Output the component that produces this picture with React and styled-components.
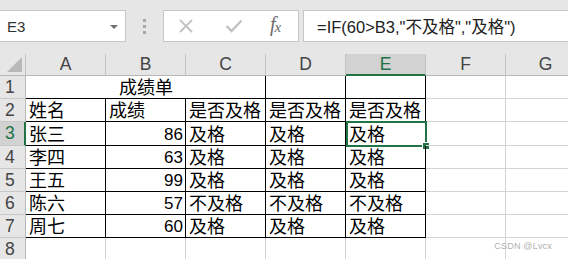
import React from "react";
import styled, { createGlobalStyle } from "styled-components";

const Global = createGlobalStyle`
  html, body { margin: 0; padding: 0; background: #ffffff; }
  body { width: 568px; height: 259px; overflow: hidden; font-family: "Liberation Sans", "Noto Sans CJK SC", sans-serif; }
`;

const Page = styled.div`
  position: relative;
  width: 568px;
  height: 259px;
  overflow: hidden;
  background: #ffffff;
`;

const Toolbar = styled.div`
  display: flex;
  align-items: flex-start;
  height: 54px;
  padding-top: 10px;
  box-sizing: border-box;
  background: #e6e6e6;
`;

const Box = styled.div`
  box-sizing: border-box;
  height: 32px;
  background: #ffffff;
  border: 1px solid #c6c6c6;
  display: flex;
  align-items: center;
`;

const NameBox = styled(Box)`
  width: 127px;
  margin-left: -1px;
  padding: 0 7px 0 7px;
  justify-content: space-between;
`;

const NameText = styled.span`
  font-family: "Liberation Sans", sans-serif;
  font-size: 15px;
  color: #333333;
`;

const DropArrow = styled.span`
  width: 0;
  height: 0;
  border-left: 4px solid transparent;
  border-right: 4px solid transparent;
  border-top: 4px solid #6f6f6f;
  margin-top: 1px;
`;

const Grip = styled.div`
  width: 37px;
  height: 32px;
  display: flex;
  flex-direction: column;
  align-items: center;
  justify-content: center;
  gap: 3px;
`;

const Dot = styled.span`
  width: 3px;
  height: 3px;
  background: #a6a6a6;
`;

const FxButtons = styled(Box)`
  width: 136px;
  padding-left: 14px;
  gap: 0;
`;

const IconSlot = styled.span`
  width: ${(p) => p.$w}px;
  display: flex;
  align-items: center;
  justify-content: ${(p) => p.$justify || "flex-start"};
`;

const FxLabel = styled.span`
  font-family: "Liberation Serif", "DejaVu Serif", serif;
  font-style: italic;
  font-size: 20px;
  color: #6a6a6a;
  letter-spacing: -1px;
  margin-top: -3px;
  sub {
    font-size: 15px;
    vertical-align: -1px;
  }
`;

const FormulaInput = styled(Box)`
  flex: 1;
  margin-left: 4px;
  margin-right: -4px;
  padding-left: 13px;
  font-family: "Liberation Sans", "Noto Sans CJK SC", sans-serif;
  font-size: 16.5px;
  color: #222222;
  white-space: nowrap;
`;

const Sheet = styled.div`
  display: grid;
  grid-template-columns: 26px repeat(7, 80px);
  grid-template-rows: 22px 23px 23px 24px 23px 23px 23px 23px 23px;
  width: 586px;
  background: #ffffff;
`;

const Corner = styled.div`
  box-sizing: border-box;
  background: #e6e6e6;
  border-right: 1px solid #c3c3c3;
  border-bottom: 1px solid #b8b8b8;
  display: flex;
  align-items: flex-end;
  justify-content: flex-end;
  padding: 0 3px 3px 0;
`;

const ColHead = styled.div`
  box-sizing: border-box;
  background: ${(p) => (p.$sel ? "#d2d2d2" : "#e6e6e6")};
  color: ${(p) => (p.$sel ? "#217346" : "#444444")};
  border-right: 1px solid #c3c3c3;
  border-bottom: ${(p) => (p.$sel ? "2px solid #217346" : "1px solid #b8b8b8")};
  display: flex;
  align-items: center;
  justify-content: center;
  font-family: "Liberation Sans", sans-serif;
  font-size: 17.5px;
  padding-top: ${(p) => (p.$sel ? "1px" : "0")};
`;

const RowHead = styled.div`
  box-sizing: border-box;
  background: ${(p) => (p.$sel ? "#d2d2d2" : "#e6e6e6")};
  color: ${(p) => (p.$sel ? "#217346" : "#444444")};
  border-right: ${(p) => (p.$sel ? "2px solid #217346" : "1px solid #b8b8b8")};
  border-bottom: 1px solid #c8c8c8;
  display: flex;
  align-items: center;
  padding-left: 5px;
  font-family: "Liberation Sans", sans-serif;
  font-size: 17.5px;
`;

const Cell = styled.div`
  box-sizing: border-box;
  position: relative;
  grid-column: span ${(p) => p.$span || 1};
  border-right: 1px solid ${(p) => (p.$line ? "#000000" : "#d4d4d4")};
  border-bottom: 1px solid ${(p) => (p.$line ? "#000000" : "#d4d4d4")};
  display: flex;
  align-items: flex-end;
  justify-content: ${(p) =>
    p.$align === "right" ? "flex-end" : p.$align === "center" ? "center" : "flex-start"};
  padding: 0 2px 0 3px;
  font-family: "Liberation Sans", "Noto Sans CJK SC", sans-serif;
  font-size: ${(p) => (p.$num ? "17px" : "18px")};
  line-height: 20px;
  color: #000000;
  white-space: nowrap;
`;

const Selection = styled.div`
  position: absolute;
  left: 0;
  top: -1px;
  width: 81px;
  height: ${(p) => p.$h}px;
  box-sizing: border-box;
  border: 2px solid #217346;
  pointer-events: none;
`;

const Handle = styled.span`
  position: absolute;
  right: -5px;
  bottom: -5px;
  width: 6px;
  height: 6px;
  background: #217346;
  border: 1px solid #ffffff;
`;

const Watermark = styled.div`
  position: absolute;
  right: 16px;
  top: 241px;
  font-family: "Liberation Sans", sans-serif;
  font-size: 9px;
  letter-spacing: 0.2px;
  color: #b0b0b0;
  white-space: nowrap;
`;

const cols = ["A", "B", "C", "D", "E", "F", "G"];

const tableRows = [
  ["姓名", "成绩", "是否及格", "是否及格", "是否及格"],
  ["张三", "86", "及格", "及格", "及格"],
  ["李四", "63", "及格", "及格", "及格"],
  ["王五", "99", "及格", "及格", "及格"],
  ["陈六", "57", "不及格", "不及格", "不及格"],
  ["周七", "60", "及格", "及格", "及格"],
];

function CrossIcon() {
  return (
    <svg width="16" height="16" viewBox="0 0 16 16">
      <path d="M2 2 L14 14 M14 2 L2 14" stroke="#c2c2c2" strokeWidth="1.8" fill="none" />
    </svg>
  );
}

function CheckIcon() {
  return (
    <svg width="18" height="14" viewBox="0 0 18 14">
      <path d="M1.5 7 L6.5 12 L16.5 1.5" stroke="#c2c2c2" strokeWidth="2.4" fill="none" />
    </svg>
  );
}

function CornerTriangle() {
  return (
    <svg width="15" height="15" viewBox="0 0 15 15">
      <path d="M15 0 L15 15 L0 15 Z" fill="#b9b9b9" />
    </svg>
  );
}

export default function App() {
  return (
    <Page>
      <Global />
      <Toolbar>
        <NameBox>
          <NameText>E3</NameText>
          <DropArrow />
        </NameBox>
        <Grip>
          <Dot />
          <Dot />
          <Dot />
        </Grip>
        <FxButtons>
          <IconSlot $w={47}>
            <CrossIcon />
          </IconSlot>
          <IconSlot $w={45}>
            <CheckIcon />
          </IconSlot>
          <FxLabel>
            f<sub>x</sub>
          </FxLabel>
        </FxButtons>
        <FormulaInput>=IF(60&gt;B3,"不及格","及格")</FormulaInput>
      </Toolbar>
      <Sheet>
        <Corner>
          <CornerTriangle />
        </Corner>
        {cols.map((c) => (
          <ColHead key={c} $sel={c === "E"}>
            {c}
          </ColHead>
        ))}

        <RowHead>1</RowHead>
        <Cell $line $span={3} $align="center">
          成绩单
        </Cell>
        <Cell $line />
        <Cell $line />
        <Cell />
        <Cell />

        {tableRows.map((r, i) => {
          const rowNo = i + 2;
          return (
            <React.Fragment key={rowNo}>
              <RowHead $sel={rowNo === 3}>{rowNo}</RowHead>
              {r.map((v, j) => (
                <Cell
                  key={j}
                  $line
                  $num={j === 1 && rowNo > 2}
                  $align={j === 1 && rowNo > 2 ? "right" : "left"}
                >
                  {v}
                  {rowNo === 3 && j === 4 && (
                    <Selection $h={26}>
                      <Handle />
                    </Selection>
                  )}
                </Cell>
              ))}
              <Cell />
              <Cell />
            </React.Fragment>
          );
        })}

        <RowHead>8</RowHead>
        {cols.map((c) => (
          <Cell key={c} />
        ))}
      </Sheet>
      <Watermark>CSDN @Lvcx</Watermark>
    </Page>
  );
}
